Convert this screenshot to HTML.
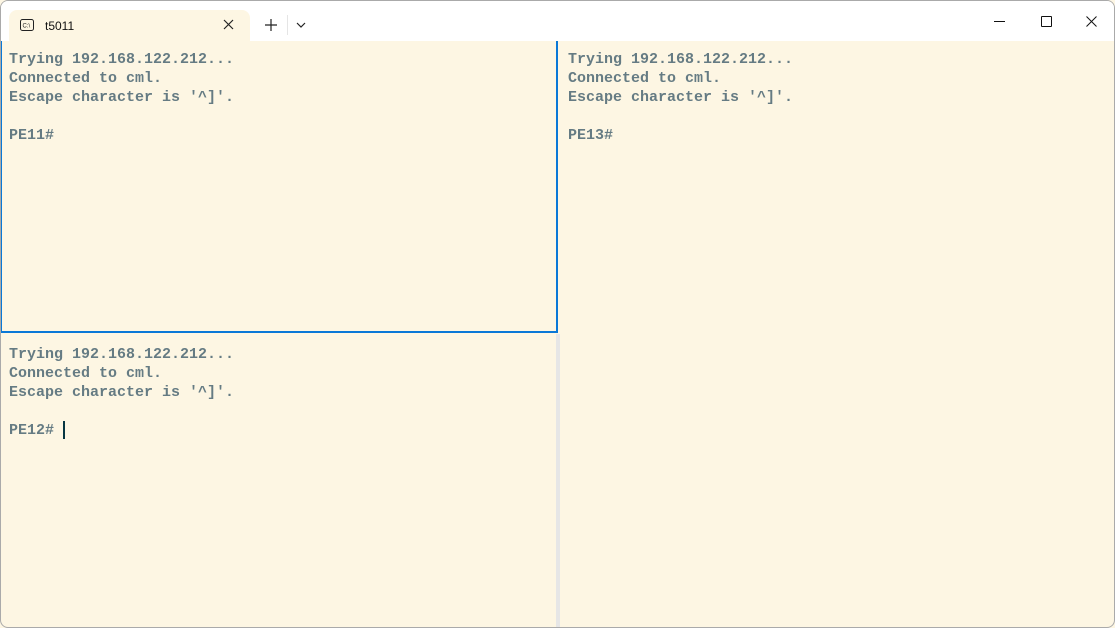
<!DOCTYPE html>
<html><head><style>
html,body{margin:0;padding:0;width:1115px;height:628px;overflow:hidden;background:#fdf6e3;}
.win{position:absolute;left:0;top:0;width:1113px;height:626px;border:1px solid #aaa;border-radius:8px;overflow:hidden;background:#fdf6e3;}
.title{position:absolute;left:0;top:0;width:1113px;height:40px;background:#fff;}
.tab{position:absolute;left:8px;top:9px;width:241px;height:31px;background:#fdf6e3;border-radius:8px 8px 0 0;font:12px "Liberation Sans",sans-serif;color:#111;}
.pane{position:absolute;font:bold 15px/19px "Liberation Mono",monospace;color:#657b83;white-space:pre;padding:0;}
.t{position:absolute;left:8px;top:9px;}
</style></head><body>
<div class="win">
<div class="title">
 <div class="tab">
  <svg style="position:absolute;left:11px;top:9px" width="14" height="12" viewBox="0 0 14 12"><rect x="0.5" y="0.5" width="13" height="11" rx="2" fill="none" stroke="#222"/><text x="2.5" y="8.5" font-size="6" font-family="Liberation Sans" fill="#222">C:\</text></svg>
  <span style="position:absolute;left:36px;top:9px">t5011</span>
  <svg style="position:absolute;left:214px;top:9px" width="11" height="11" viewBox="0 0 11 11"><path d="M1 1L10 10M10 1L1 10" stroke="#222" stroke-width="1.2"/></svg>
 </div>
 <svg style="position:absolute;left:264px;top:18px" width="12" height="12"><path d="M6 0V12M0 6H12" stroke="#222" stroke-width="1.2"/></svg>
 <div style="position:absolute;left:286px;top:14px;width:1px;height:20px;background:#e5e5e5"></div>
 <svg style="position:absolute;left:295px;top:21px" width="10" height="6"><path d="M1 1L5 5L9 1" fill="none" stroke="#222" stroke-width="1.2"/></svg>
 <div style="position:absolute;left:993px;top:20px;width:11px;height:1px;background:#111"></div>
 <div style="position:absolute;left:1040px;top:15px;width:9px;height:9px;border:1px solid #111;border-radius:1px"></div>
 <svg style="position:absolute;left:1085px;top:15px" width="11" height="11"><path d="M0.5 0.5L10.5 10.5M10.5 0.5L0.5 10.5" stroke="#111" stroke-width="1"/></svg>
</div>
<div class="pane" style="left:-1px;top:40px;width:554px;height:290px;border:2px solid #0a78d7;border-top:none;">
<div class="t" style="left:7px">Trying 192.168.122.212...
Connected to cml.
Escape character is '^]'.

PE11#</div></div>
<div style="position:absolute;left:555px;top:333px;width:4px;height:293px;background:#e6e6e6"></div>
<div class="pane" style="left:0;top:333px;width:555px;height:293px;">
<div class="t" style="top:11px">Trying 192.168.122.212...
Connected to cml.
Escape character is '^]'.

PE12# </div></div>
<div style="position:absolute;left:62px;top:420px;width:2px;height:18px;background:#073642"></div>
<div class="pane" style="left:559px;top:40px;width:556px;height:590px;">
<div class="t">Trying 192.168.122.212...
Connected to cml.
Escape character is '^]'.

PE13#</div></div>
</div>
</body></html>
